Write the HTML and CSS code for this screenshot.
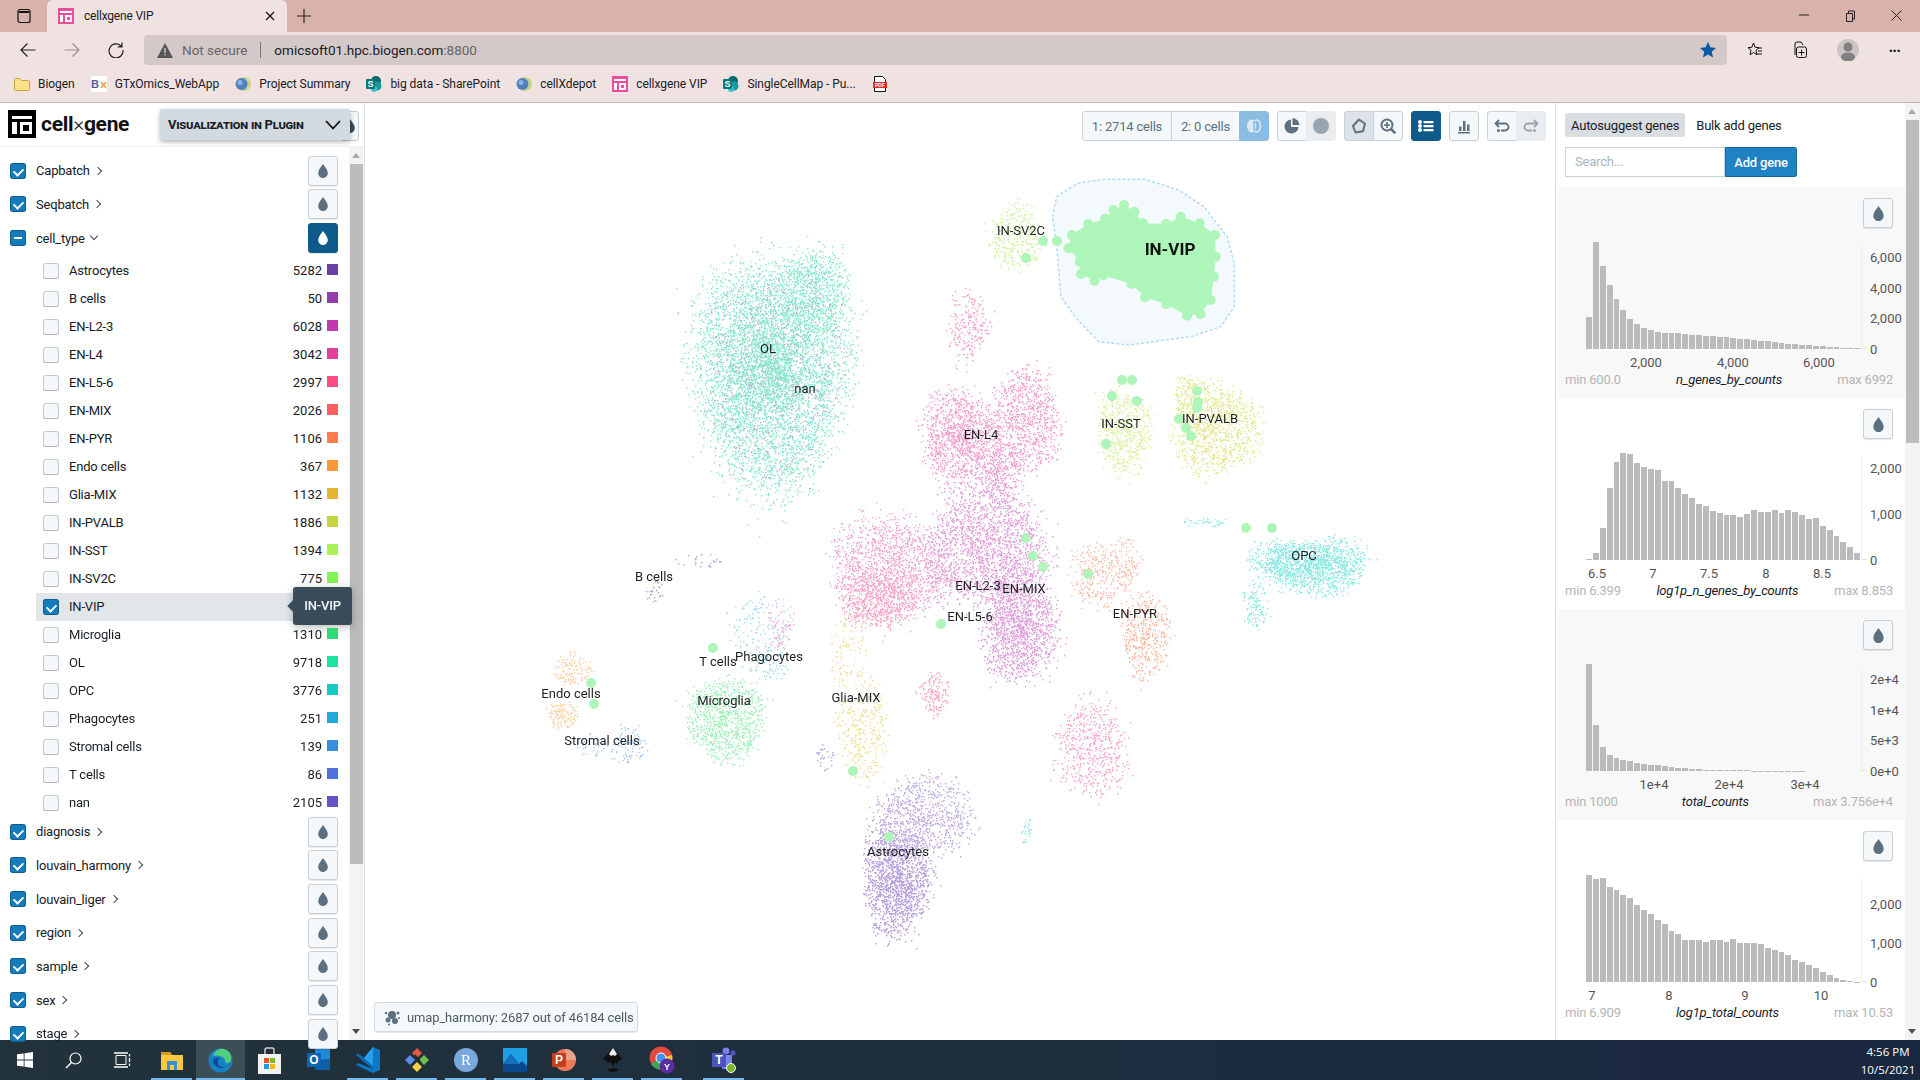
FILE: index.html
```html
<!DOCTYPE html>
<html lang="en">
<head>
  <meta charset="UTF-8" />
  <title>cellxgene VIP</title>
  <link rel="stylesheet" href="styles.css">
</head>
<body>
  <svg class="icon-defs" width="0" height="0">
    <symbol id="i-drop" viewBox="0 0 16 16"><path d="M8 0C5.6 3.6 2.5 6.800 2.500 10.300 2.500 13.500 5 16 8 16s5.500-2.500 5.500-5.700C13.500 6.800 10.400 3.600 8 0z"/></symbol>
    <symbol id="i-fav" viewBox="0 0 16 16"><rect width="16" height="16" fill="#ee4c9e"/><path d="M2 3h12v2H2zM2 7h3v7H2zM7 7h7v7H7z" fill="#fff"/><rect x="9" y="9" width="3" height="3" fill="#ee4c9e"/></symbol>
    <symbol id="i-globe" viewBox="0 0 16 16"><circle cx="9" cy="8" r="7" fill="#c4d58a"/><circle cx="6.500" cy="8" r="6" fill="#4f7fc0"/><circle cx="5" cy="6.500" r="2.500" fill="#8fb3e0"/></symbol>
    <symbol id="i-sp" viewBox="0 0 16 16"><circle cx="10" cy="5" r="5" fill="#036c70"/><circle cx="11" cy="10" r="4.500" fill="#1a9ba1"/><circle cx="8" cy="13" r="3" fill="#37c6d0"/><rect y="3" width="9" height="10" rx="1" fill="#03787c"/><text x="4.500" y="11" class="glyph-s">S</text></symbol>
  </svg>

  <header class="browser">
    <div class="tabstrip">
      <svg class="tabs-btn" width="14" height="16" viewBox="0 0 14 16"><rect x="1" y="1.500" width="12" height="13" rx="2" fill="none" stroke="#111" stroke-width="1.200"/><path d="M2 4h10" stroke="#111" stroke-width="2"/></svg>
      <div class="tab">
        <svg class="fav" width="16" height="16"><use href="#i-fav"/></svg>
        <span class="tab-title">cellxgene VIP</span>
        <svg width="10" height="10" viewBox="0 0 10 10"><path d="M1 1l8 8M9 1l-8 8" stroke="#111" stroke-width="1.300"/></svg>
      </div>
      <svg class="new-tab" width="14" height="14" viewBox="0 0 14 14"><path d="M7 0v14M0 7h14" stroke="#222" stroke-width="1.100"/></svg>
      <div class="win-btns">
        <svg width="10" height="10" viewBox="0 0 10 10"><path d="M0 5h10" stroke="#222"/></svg>
        <svg width="10" height="12" viewBox="0 0 10 12"><path d="M1.500 3.500h6v8h-6zM3.500 3.500V1h6v8h-2" fill="none" stroke="#222"/></svg>
        <svg width="11" height="11" viewBox="0 0 11 11"><path d="M.5.500l10 10M10.500.500l-10 10" stroke="#222"/></svg>
      </div>
    </div>
    <div class="toolbar">
      <svg class="nav-ico" width="16" height="16" viewBox="0 0 16 16"><path d="M15.500 8H1M7.500 1.500L1 8l6.500 6.500" fill="none" stroke="#222" stroke-width="1.200"/></svg>
      <svg class="nav-ico" width="16" height="16" viewBox="0 0 16 16"><path d="M.5 8H15M8.500 1.500L15 8l-6.500 6.500" fill="none" stroke="#9a9090" stroke-width="1.200"/></svg>
      <svg class="nav-ico" width="16" height="16" viewBox="0 0 16 16"><path d="M13.500 4.500A7 7 0 1 0 15 8M14 .500v4.300H9.800" fill="none" stroke="#222" stroke-width="1.200"/></svg>
      <div class="addr">
        <svg width="16" height="15" viewBox="0 0 16 15"><path d="M8 0l8 15H0z" fill="#555"/><path d="M7.300 5h1.400v5H7.300zM7.300 11h1.400v1.500H7.300z" fill="#d4c8c8"/></svg>
        <span class="addr-warn">Not secure</span>
        <span class="addr-sep"></span>
        <span class="addr-url">omicsoft01.hpc.biogen.com<span class="addr-port">:8800</span></span>
        <svg class="addr-star" width="16" height="16" viewBox="0 0 16 16"><path d="M8 0l2.400 5.300 5.600.6-4.200 3.800 1.200 5.700L8 12.500l-5 2.900 1.200-5.700L0 5.900l5.600-.6z" fill="#0a5aa8"/></svg>
      </div>
      <div class="tool-right">
        <svg width="16" height="16" viewBox="0 0 16 16"><path d="M6.500 1l1.700 4.300 3.800.3-3 2.700.9 4.500-3.400-2.300-3.400 2.300.9-4.500-3-2.700 3.800-.3z" fill="none" stroke="#111"/><path d="M11 6h4M11 9h4M10 12h5" stroke="#111"/></svg>
        <svg width="16" height="18" viewBox="0 0 16 18"><path d="M3 14V3a2 2 0 0 1 2-2h4l2 3" fill="none" stroke="#111"/><rect x="4.500" y="6" width="10" height="10.500" rx="2" fill="none" stroke="#111"/><path d="M9.500 8.500v6M6.500 11.500h6" stroke="#111"/></svg>
        <svg class="avatar" width="22" height="22" viewBox="0 0 22 22"><circle cx="11" cy="11" r="11" fill="#c8c4c2"/><circle cx="11" cy="8" r="4.500" fill="#7f7f7f"/><ellipse cx="11" cy="18" rx="7" ry="4.500" fill="#7f7f7f"/></svg>
        <span class="more">···</span>
      </div>
    </div>
    <div class="bookmarks">
      <span class="bm"><svg width="16" height="16" viewBox="0 0 16 16"><path d="M.5 3.500a1 1 0 0 1 1-1h4l2 2h7a1 1 0 0 1 1 1v8a1 1 0 0 1-1 1h-13a1 1 0 0 1-1-1z" fill="#fbe08a" stroke="#c8a43c"/></svg>Biogen</span>
      <span class="bm"><svg width="16" height="16" viewBox="0 0 16 16"><rect width="16" height="16" fill="#fff"/><text x="0" y="12" class="glyph-bx">B</text><path d="M10 6l5 6M15 6l-5 6" stroke="#e8a33c" stroke-width="1.500"/></svg>GTxOmics_WebApp</span>
      <span class="bm"><svg width="16" height="16"><use href="#i-globe"/></svg>Project Summary</span>
      <span class="bm"><svg width="16" height="16"><use href="#i-sp"/></svg>big data - SharePoint</span>
      <span class="bm"><svg width="16" height="16"><use href="#i-globe"/></svg>cellXdepot</span>
      <span class="bm"><svg width="16" height="16"><use href="#i-fav"/></svg>cellxgene VIP</span>
      <span class="bm"><svg width="16" height="16"><use href="#i-sp"/></svg>SingleCellMap - Pu...</span>
      <span class="bm"><svg width="16" height="16" viewBox="0 0 16 16"><path d="M2.500.500h8l3 3v12h-11z" fill="#fff" stroke="#111"/><rect x="1" y="6" width="14" height="6" fill="#e02b20"/><text x="8" y="11" class="glyph-pdf">PDF</text></svg></span>
    </div>
  </header>

  <main class="app">
    <aside class="sidebar">
      <div class="logo-row">
        <svg class="logo" width="28" height="28" viewBox="0 0 28 28"><rect width="28" height="28" fill="#000"/><path d="M4 6h20v3H4zM4 12h5v12H4zM12 12h12v12H12z" fill="#fff"/><rect x="15" y="15" width="6" height="6" fill="#000"/></svg>
        <span class="logo-text">cell<span class="logo-x">×</span>gene</span>
        <button class="edge-btn"><svg width="14" height="14"><use href="#i-drop"/></svg></button>
        <div class="plugin-drop">
          <span>Visualization in Plugin</span>
          <svg width="16" height="10" viewBox="0 0 16 10"><path d="M1 1l7 7.500L15 1" fill="none" stroke="#111" stroke-width="1.800"/></svg>
        </div>
      </div>
      <div class="side-body">
        <div class="cat-list">
          <div class="cat"><span class="check on"></span><span class="cat-name">Capbatch</span><span class="chev"></span><button class="drop-btn"><svg width="14" height="14"><use href="#i-drop"/></svg></button></div>
          <div class="cat"><span class="check on"></span><span class="cat-name">Seqbatch</span><span class="chev"></span><button class="drop-btn"><svg width="14" height="14"><use href="#i-drop"/></svg></button></div>
          <div class="cat"><span class="check mixed"></span><span class="cat-name">cell_type</span><span class="chev down"></span><button class="drop-btn active"><svg width="14" height="14"><use href="#i-drop"/></svg></button></div>
          <div class="cell-list">
            <div class="cell"><span class="check"></span><span class="cell-name">Astrocytes</span><span class="cell-n">5282</span><i class="swatch c-astro"></i></div>
            <div class="cell"><span class="check"></span><span class="cell-name">B cells</span><span class="cell-n">50</span><i class="swatch c-b"></i></div>
            <div class="cell"><span class="check"></span><span class="cell-name">EN-L2-3</span><span class="cell-n">6028</span><i class="swatch c-l23"></i></div>
            <div class="cell"><span class="check"></span><span class="cell-name">EN-L4</span><span class="cell-n">3042</span><i class="swatch c-l4"></i></div>
            <div class="cell"><span class="check"></span><span class="cell-name">EN-L5-6</span><span class="cell-n">2997</span><i class="swatch c-l56"></i></div>
            <div class="cell"><span class="check"></span><span class="cell-name">EN-MIX</span><span class="cell-n">2026</span><i class="swatch c-mix"></i></div>
            <div class="cell"><span class="check"></span><span class="cell-name">EN-PYR</span><span class="cell-n">1106</span><i class="swatch c-pyr"></i></div>
            <div class="cell"><span class="check"></span><span class="cell-name">Endo cells</span><span class="cell-n">367</span><i class="swatch c-endo"></i></div>
            <div class="cell"><span class="check"></span><span class="cell-name">Glia-MIX</span><span class="cell-n">1132</span><i class="swatch c-glia"></i></div>
            <div class="cell"><span class="check"></span><span class="cell-name">IN-PVALB</span><span class="cell-n">1886</span><i class="swatch c-pvalb"></i></div>
            <div class="cell"><span class="check"></span><span class="cell-name">IN-SST</span><span class="cell-n">1394</span><i class="swatch c-sst"></i></div>
            <div class="cell"><span class="check"></span><span class="cell-name">IN-SV2C</span><span class="cell-n">775</span><i class="swatch c-sv2c"></i></div>
            <div class="cell hover"><span class="check on"></span><span class="cell-name">IN-VIP</span><div class="tip">IN-VIP</div></div>
            <div class="cell"><span class="check"></span><span class="cell-name">Microglia</span><span class="cell-n">1310</span><i class="swatch c-micro"></i></div>
            <div class="cell"><span class="check"></span><span class="cell-name">OL</span><span class="cell-n">9718</span><i class="swatch c-ol"></i></div>
            <div class="cell"><span class="check"></span><span class="cell-name">OPC</span><span class="cell-n">3776</span><i class="swatch c-opc"></i></div>
            <div class="cell"><span class="check"></span><span class="cell-name">Phagocytes</span><span class="cell-n">251</span><i class="swatch c-phago"></i></div>
            <div class="cell"><span class="check"></span><span class="cell-name">Stromal cells</span><span class="cell-n">139</span><i class="swatch c-stromal"></i></div>
            <div class="cell"><span class="check"></span><span class="cell-name">T cells</span><span class="cell-n">86</span><i class="swatch c-t"></i></div>
            <div class="cell"><span class="check"></span><span class="cell-name">nan</span><span class="cell-n">2105</span><i class="swatch c-nan"></i></div>
          </div>
          <div class="cat"><span class="check on"></span><span class="cat-name">diagnosis</span><span class="chev"></span><button class="drop-btn"><svg width="14" height="14"><use href="#i-drop"/></svg></button></div>
          <div class="cat"><span class="check on"></span><span class="cat-name">louvain_harmony</span><span class="chev"></span><button class="drop-btn"><svg width="14" height="14"><use href="#i-drop"/></svg></button></div>
          <div class="cat"><span class="check on"></span><span class="cat-name">louvain_liger</span><span class="chev"></span><button class="drop-btn"><svg width="14" height="14"><use href="#i-drop"/></svg></button></div>
          <div class="cat"><span class="check on"></span><span class="cat-name">region</span><span class="chev"></span><button class="drop-btn"><svg width="14" height="14"><use href="#i-drop"/></svg></button></div>
          <div class="cat"><span class="check on"></span><span class="cat-name">sample</span><span class="chev"></span><button class="drop-btn"><svg width="14" height="14"><use href="#i-drop"/></svg></button></div>
          <div class="cat"><span class="check on"></span><span class="cat-name">sex</span><span class="chev"></span><button class="drop-btn"><svg width="14" height="14"><use href="#i-drop"/></svg></button></div>
          <div class="cat"><span class="check on"></span><span class="cat-name">stage</span><span class="chev"></span><button class="drop-btn"><svg width="14" height="14"><use href="#i-drop"/></svg></button></div>
        </div>
        <div class="scroll side-scroll"><b class="arrow up"></b><div class="thumb"></div><b class="arrow dn"></b></div>
      </div>
    </aside>

    <section class="plot" id="plot">
      <canvas id="scatter" width="1190" height="937"></canvas>
      <div class="plot-tools">
        <div class="btn-group">
          <span class="tbtn txt">1: 2714 cells</span>
          <span class="tbtn txt">2: 0 cells</span>
          <span class="tbtn venn"><svg width="16" height="16" viewBox="0 0 16 16"><ellipse cx="5.500" cy="8" rx="4.500" ry="6.500" fill="#dce9f3"/><ellipse cx="10.500" cy="8" rx="4" ry="6" fill="none" stroke="#dce9f3" stroke-width="1.500"/><path d="M8 3v10" stroke="#8bbde2" stroke-width="1.500"/></svg></span>
        </div>
        <div class="btn-group">
          <span class="tbtn"><svg width="16" height="16" viewBox="0 0 16 16"><path d="M7 1.500a7 7 0 1 0 7.500 7.500H7z" fill="#5c7080"/><path d="M8.500 0v7h7A7.500 7.500 0 0 0 8.500 0z" fill="#5c7080"/></svg></span>
          <span class="tbtn off"><svg width="16" height="16" viewBox="0 0 16 16"><circle cx="8" cy="8" r="8" fill="#98a5b1"/></svg></span>
        </div>
        <div class="btn-group">
          <span class="tbtn pressed"><svg width="16" height="16" viewBox="0 0 16 16"><path d="M8 1.500l6 4.200-2 7.500-7.500 1.300-2.500-6.500z" fill="none" stroke="#5c7080" stroke-width="2" stroke-linejoin="round"/></svg></span>
          <span class="tbtn"><svg width="16" height="16" viewBox="0 0 16 16"><circle cx="7" cy="7" r="5.500" fill="none" stroke="#5c7080" stroke-width="2"/><path d="M11 11l4.300 4.300" stroke="#5c7080" stroke-width="2.500"/><path d="M7 4v6M4 7h6" stroke="#5c7080" stroke-width="1.600"/></svg></span>
        </div>
        <span class="tbtn solo dark"><svg width="16" height="16" viewBox="0 0 16 16"><path d="M5.500 3h10v2.200h-10zM5.500 7h10v2.200h-10zM5.500 11h10v2.200h-10z" fill="#fff"/><circle cx="2" cy="4" r="2" fill="#fff"/><circle cx="2" cy="8" r="2" fill="#fff"/><circle cx="2" cy="12" r="2" fill="#fff"/></svg></span>
        <span class="tbtn solo"><svg width="16" height="16" viewBox="0 0 16 16"><path d="M2 14h12v1.500H2zM3 8.500h2.500V13H3zM7 3h2.500v10H7zM11 6.500h2.500V13H11z" fill="#5c7080"/></svg></span>
        <div class="btn-group">
          <span class="tbtn"><svg width="16" height="16" viewBox="0 0 16 16"><path d="M5 2L1.500 5.500 5 9" fill="none" stroke="#5c7080" stroke-width="1.800"/><path d="M2 5.500h9a3.500 3.500 0 0 1 0 7H7" fill="none" stroke="#5c7080" stroke-width="1.800"/><circle cx="4.500" cy="12.500" r="1.500" fill="#5c7080"/></svg></span>
          <span class="tbtn off"><svg width="16" height="16" viewBox="0 0 16 16"><path d="M11 2l3.500 3.500L11 9" fill="none" stroke="#98a5b1" stroke-width="1.800"/><path d="M14 5.500H5a3.500 3.500 0 0 0 0 7h4" fill="none" stroke="#98a5b1" stroke-width="1.800"/><circle cx="11.500" cy="12.500" r="1.500" fill="#98a5b1"/></svg></span>
        </div>
      </div>
      <div class="status">
        <svg width="17" height="17" viewBox="0 0 17 17"><circle cx="8" cy="6" r="4" fill="#5c7080"/><circle cx="4" cy="11" r="2.500" fill="#5c7080"/><circle cx="11" cy="12" r="3" fill="#5c7080"/><circle cx="2" cy="4" r="1.200" fill="#5c7080"/><circle cx="14" cy="4" r="1.500" fill="#5c7080"/><circle cx="15" cy="9" r="1" fill="#5c7080"/><circle cx="5" cy="15.500" r="1" fill="#5c7080"/></svg>
        <span>umap_harmony: 2687 out of 46184 cells</span>
      </div>
    </section>

    <aside class="genes">
      <div class="genes-body">
        <div class="gene-tabs">
          <span class="gene-tab on">Autosuggest genes</span>
          <span class="gene-tab">Bulk add genes</span>
        </div>
        <div class="gene-search">
          <span class="search-box">Search...</span>
          <span class="add-gene">Add gene</span>
        </div>
        <div id="hists"></div>
      </div>
      <div class="scroll gene-scroll"><b class="arrow up"></b><div class="thumb"></div><b class="arrow dn"></b></div>
    </aside>
  </main>

  <footer class="taskbar">
    <span class="task"><svg width="16" height="16" viewBox="0 0 16 16"><path d="M0 2.300l6.700-.9v6.200H0zM7.500 1.300L16 0v7.600H7.500zM0 8.400h6.700v6.200L0 13.700zM7.500 8.400H16V16l-8.500-1.200z" fill="#fff"/></svg></span>
    <span class="task"><svg width="17" height="17" viewBox="0 0 17 17"><circle cx="10.500" cy="6.500" r="5.500" fill="none" stroke="#fff" stroke-width="1.200"/><path d="M6.500 10.500L1 16" stroke="#fff" stroke-width="1.400"/></svg></span>
    <span class="task"><svg width="18" height="16" viewBox="0 0 18 16"><path d="M2 3.500h10v9H2z" fill="none" stroke="#fff"/><path d="M0 1h14M0 15h14M15.500 2v2.500M15.500 6v4M15.500 11.500V14" stroke="#fff" stroke-width="1.300"/></svg></span>
    <span class="task run"><svg width="24" height="22" viewBox="0 0 24 22"><path d="M1 3h9l2 3h11v15H1z" fill="#f8c93e"/><path d="M1 3h9l2 3H1z" fill="#d49a1c"/><path d="M7 12h10v9h-3v-5h-4v5H7z" fill="#3a8fd8"/></svg></span>
    <span class="task run cur"><svg width="25" height="25" viewBox="0 0 25 25"><circle cx="12.500" cy="12.500" r="12" fill="#1b7fc4"/><path d="M5 8a9 9 0 0 1 18 4c0 3-4 3.500-6 2.500 1.500-5-6-8-12-6.500z" fill="#4fd07c"/><path d="M12 10a5 5 0 0 0 2 9c3 1 6 0 8-2-5 5-16 4-17-4 1-3 4-4 7-3z" fill="#0a4f96"/></svg></span>
    <span class="task"><svg width="23" height="27" viewBox="0 0 23 27"><path d="M7 7V3a2 2 0 0 1 2-2h5a2 2 0 0 1 2 2v4" fill="none" stroke="#ccc" stroke-width="1.500"/><rect y="7" width="23" height="20" fill="#f2f2f2"/><rect x="6" y="11" width="5" height="5" fill="#e8542a"/><rect x="12" y="11" width="5" height="5" fill="#7eb62a"/><rect x="6" y="17" width="5" height="5" fill="#1f9ce0"/><rect x="12" y="17" width="5" height="5" fill="#f4b71c"/></svg></span>
    <span class="task"><svg width="24" height="24" viewBox="0 0 24 24"><path d="M8 1h15v21H8z" fill="#1f8ad8"/><path d="M8 12l15-1v11H8z" fill="#0f5fa8"/><rect y="5" width="14" height="14" fill="#0a64b4"/><text x="7" y="16" class="glyph-o">O</text></svg></span>
    <span class="task run"><svg width="24" height="26" viewBox="0 0 24 26"><path d="M17 0l7 3v20l-7 3L0 18l2-2 15 6z" fill="#0a78c8"/><path d="M17 0v22L6 13z" fill="#24a0ec"/><path d="M0 8l2-2 15 13v3z" fill="#0a6bb4"/></svg></span>
    <span class="task run"><svg width="24" height="24" viewBox="0 0 24 24"><path d="M12 0l5 5-5 5-5-5z" fill="#e0584c"/><path d="M5 7l5 5-5 5-5-5z" fill="#5b8ee0"/><path d="M19 7l5 5-5 5-5-5z" fill="#6cc24a"/><path d="M12 14l5 5-5 5-5-5z" fill="#f5d24a"/><path d="M10 7l6 8" stroke="#222" stroke-width="1.500"/></svg></span>
    <span class="task run"><svg width="24" height="24" viewBox="0 0 24 24"><circle cx="12" cy="12" r="12" fill="#78a8dc"/><text x="12" y="17" class="glyph-r">R</text></svg></span>
    <span class="task run"><svg width="24" height="24" viewBox="0 0 24 24"><rect width="24" height="24" fill="#1ea0e6"/><path d="M0 24V16L8 6l8 10 3-3 5 5v6z" fill="#0a4a8c"/><path d="M8 6l8 10H0z" fill="#1670bc"/></svg></span>
    <span class="task run"><svg width="24" height="24" viewBox="0 0 24 24"><circle cx="13" cy="12" r="11" fill="#f07a58"/><path d="M13 1a11 11 0 0 1 11 11H13z" fill="#e8a488"/><rect y="5" width="14" height="14" rx="1" fill="#c43e1c"/><text x="7" y="16" class="glyph-o">P</text></svg></span>
    <span class="task run"><svg width="24" height="25" viewBox="0 0 24 25"><path d="M12 0l9 11-3 2-2 3-2-2-2 5-2-5-3 1-2-3-3-1z" fill="#111"/><path d="M12 0l4 6-2 2-2-1-2 1-2-2z" fill="#eee"/><ellipse cx="12" cy="22" rx="5" ry="1.800" fill="#111"/></svg></span>
    <span class="task run"><svg width="26" height="28" viewBox="0 0 26 28"><circle cx="12" cy="12" r="11.500" fill="#e04a3c"/><path d="M12 12L2 18a11.500 11.500 0 0 0 13 5z" fill="#3aa858"/><path d="M12 12l3 11A11.500 11.500 0 0 0 23 9z" fill="#f4c430"/><circle cx="12" cy="12" r="5" fill="#4a8fe8" stroke="#fff"/><circle cx="18" cy="20" r="7.500" fill="#5b2da0"/><text x="18" y="24" class="glyph-y">Y</text></svg></span>
    <span class="task run teams"><svg width="24" height="26" viewBox="0 0 24 26"><circle cx="14" cy="4" r="3.500" fill="#7b83eb"/><circle cx="21" cy="6" r="2.500" fill="#5059c9"/><path d="M10 8h10v14H10z" fill="#7b83eb"/><rect y="6" width="14" height="14" fill="#4b53bc"/><text x="7" y="17" class="glyph-o">T</text><circle cx="19" cy="21" r="4.500" fill="#7cb82f" stroke="#fff"/></svg></span>
    <div class="clock"><span>4:56 PM</span><span>10/5/2021</span></div>
  </footer>

  <script src="script.js"></script>
</body>
</html>
```
FILE: styles.css
```css
* {
  margin: 0;
  padding: 0;
  box-sizing: border-box;
}

html, body {
  width: 1920px;
  height: 1080px;
  overflow: hidden;
}

body {
  display: flex;
  flex-direction: column;
  font-family: Roboto, sans-serif;
  font-size: 13px;
  letter-spacing: -0.2px;
  color: #182026;
  background: white;
}

.icon-defs {
  position: absolute;
}

button {
  font: inherit;
}

/* browser chrome */
.browser {
  height: 103px;
  flex: none;
  background: #f0e2e1;
  border-bottom: 1px solid #c4b5b3;
}

.tabstrip {
  height: 32px;
  background: #d8b2ab;
  display: flex;
  align-items: center;
  padding-left: 17px;
}

.tabstrip svg {
  flex: none;
}

.tabs-btn {
  margin-right: 16px;
}

.tab {
  width: 240px;
  height: 32px;
  background: #f0e2e1;
  border-radius: 6px 6px 0 0;
  display: flex;
  align-items: center;
  padding: 0 12px 0 11px;
  font-size: 12px;
}

.tab-title {
  flex: 1;
  margin-left: 10px;
}

.new-tab {
  margin-left: 10px;
}

.win-btns {
  margin-left: auto;
  width: 138px;
  padding-right: 18px;
  display: flex;
  justify-content: space-between;
  padding-left: 17px;
}

.toolbar {
  height: 36px;
  display: flex;
  align-items: center;
  padding: 0 20px 0 0;
}

.nav-ico {
  margin-left: 20px;
  margin-right: 8px;
  flex: none;
}

.addr {
  margin-left: 12px;
  width: 1583px;
  flex: none;
  height: 30px;
  background: #d4c8c8;
  border-radius: 4px;
  display: flex;
  align-items: center;
  padding: 0 12px 0 13px;
  font-size: 13.500px;
  letter-spacing: 0;
}

.addr-warn {
  color: #666;
  margin-left: 9px;
}

.addr-sep {
  width: 1px;
  height: 16px;
  background: #777;
  margin: 0 13px;
}

.addr-port {
  color: #666;
}

.addr-star {
  margin-left: auto;
  margin-right: -1px;
}

.tool-right {
  flex: 1;
  display: flex;
  align-items: center;
  justify-content: space-between;
  padding-left: 20px;
}

.more {
  font-weight: 700;
  font-size: 16px;
  letter-spacing: -1px;
}

.bookmarks {
  height: 34px;
  display: flex;
  align-items: center;
  gap: 16px;
  padding: 0 0 2px 14px;
  font-size: 12px;
  letter-spacing: -0.05px;
}

.bm {
  display: flex;
  align-items: center;
  gap: 8px;
}

.glyph-s, .glyph-o, .glyph-r, .glyph-y, .glyph-pdf {
  font-family: "Liberation Sans", sans-serif;
  fill: #fff;
  text-anchor: middle;
  font-weight: 700;
}

.glyph-s {
  font-size: 9px;
}

.glyph-o {
  font-size: 12px;
}

.glyph-r {
  font-family: "Liberation Serif", serif;
  font-weight: 400;
  font-size: 15px;
}

.glyph-y {
  font-size: 9px;
}

.glyph-pdf {
  font-size: 5px;
}

.glyph-bx {
  font-family: "Liberation Sans", sans-serif;
  font-weight: 700;
  font-size: 11px;
  fill: #55609c;
}

/* app layout */
.app {
  flex: 1;
  display: flex;
  min-height: 0;
}

.sidebar {
  width: 365px;
  flex: none;
  display: flex;
  flex-direction: column;
  border-right: 1px solid #d8e1e8;
}

.logo-row {
  height: 44px;
  flex: none;
  display: flex;
  align-items: center;
  padding: 0 0 2px 8px;
  border-bottom: 1px solid #eef0f2;
  position: relative;
}

.logo-text {
  font-size: 21px;
  font-weight: 700;
  margin-left: 5px;
  color: #111;
  letter-spacing: -0.3px;
}

.logo-x {
  font-weight: 300;
}

.edge-btn {
  position: absolute;
  left: 340px;
  top: 8px;
  width: 19px;
  height: 30px;
  background: #f5f8fa;
  border: 1px solid #c5ccd2;
  border-radius: 3px;
  display: flex;
  align-items: center;
  justify-content: center;
  fill: #394b59;
}

.plugin-drop {
  position: absolute;
  left: 160px;
  top: 6px;
  width: 190px;
  height: 31px;
  background: #d3dadf;
  box-shadow: 0 2px 5px rgba(0, 0, 0, 0.3);
  border-radius: 2px;
  display: flex;
  align-items: center;
  justify-content: space-between;
  padding: 0 9px 0 8px;
  font-variant: small-caps;
  font-weight: 700;
  font-size: 13px;
  letter-spacing: -0.25px;
}

.side-body {
  flex: 1;
  min-height: 0;
  display: flex;
}

.cat-list {
  flex: 1;
  position: relative;
  z-index: 1;
  padding: 7px 11px 0 10px;
}

.cat {
  height: 33.670px;
  display: flex;
  align-items: center;
}

.cat-name {
  margin-left: 10px;
}

.chev {
  width: 6px;
  height: 6px;
  margin-left: 5px;
  border-top: 1.500px solid #394b59;
  border-right: 1.500px solid #394b59;
  transform: rotate(45deg);
}

.chev.down {
  transform: translateY(-2px) rotate(135deg);
  margin-left: 6px;
}

.check {
  width: 16px;
  height: 16px;
  flex: none;
  border-radius: 3px;
  background: #f5f8fa;
  box-shadow: inset 0 0 0 1px rgba(16, 22, 26, 0.2), inset 0 -1px 0 rgba(16, 22, 26, 0.1);
  position: relative;
}

.check.on, .check.mixed {
  background: #137cbd;
  box-shadow: inset 0 0 0 1px rgba(16, 22, 26, 0.3);
}

.check.on::after {
  content: "";
  position: absolute;
  left: 5px;
  top: 3px;
  width: 5px;
  height: 8px;
  border-right: 2px solid white;
  border-bottom: 2px solid white;
  transform: rotate(45deg) scale(0.95);
}

.check.mixed::after {
  content: "";
  position: absolute;
  left: 4px;
  top: 7px;
  width: 8px;
  height: 2px;
  background: white;
}

.drop-btn {
  margin-left: auto;
  width: 30px;
  height: 30px;
  flex: none;
  background: #f5f8fa;
  border: 1px solid #c9d0d6;
  border-radius: 3px;
  box-shadow: 0 1px 1px rgba(16, 22, 26, 0.1);
  display: flex;
  align-items: center;
  justify-content: center;
  fill: #5c7080;
}

.drop-btn.active {
  background: #0e5a8a;
  border-color: #0e5a8a;
  fill: white;
}

.cell-list {
  margin: 2px 0 -2px 26px;
}

.cell {
  height: 28px;
  display: flex;
  align-items: center;
  padding-left: 7px;
  position: relative;
}

.cell-name {
  margin-left: 10px;
  flex: 1;
}

.cell-n {
  margin-right: 5px;
  letter-spacing: 0;
}

.swatch {
  width: 11px;
  height: 11px;
  display: block;
  transform: translateY(-1px);
}

.cell.hover {
  background: #e2e6e9;
}

.tip {
  position: absolute;
  left: 257px;
  top: -6px;
  width: 59px;
  height: 38px;
  background: #394b59;
  color: #f5f8fa;
  border-radius: 3px;
  font-weight: 500;
  display: flex;
  align-items: center;
  justify-content: center;
  box-shadow: 0 2px 8px rgba(16, 22, 26, 0.3);
}

.tip::before {
  content: "";
  position: absolute;
  left: -4px;
  top: 15px;
  width: 8px;
  height: 8px;
  background: #394b59;
  transform: rotate(45deg);
}

.c-astro { background: #6b3fa8; }
.c-b { background: #953cb0; }
.c-l23 { background: #c03bb0; }
.c-l4 { background: #e53f9e; }
.c-l56 { background: #fb4c86; }
.c-mix { background: #fd5f5f; }
.c-pyr { background: #fd7d4a; }
.c-endo { background: #fd9838; }
.c-glia { background: #e3b532; }
.c-pvalb { background: #c6d43c; }
.c-sst { background: #aaf158; }
.c-sv2c { background: #80f552; }
.c-micro { background: #2dda76; }
.c-ol { background: #1de3a2; }
.c-opc { background: #16cbc3; }
.c-phago { background: #20a9dc; }
.c-stromal { background: #348fe3; }
.c-t { background: #4f71dc; }
.c-nan { background: #6353c8; }

.scroll {
  width: 15px;
  flex: none;
  background: #f3f3f3;
  position: relative;
}

.thumb {
  position: absolute;
  left: 1px;
  right: 1px;
  background: #bcbcbc;
}

.side-scroll .thumb {
  top: 17px;
  height: 700px;
}

.gene-scroll .thumb {
  top: 17px;
  height: 323px;
}

.arrow {
  position: absolute;
  left: 3px;
  width: 0;
  height: 0;
  border-left: 4px solid transparent;
  border-right: 4px solid transparent;
}

.arrow.up {
  top: 6px;
  border-bottom: 5px solid #a8a8a8;
}

.arrow.dn {
  bottom: 6px;
  border-top: 5px solid #505050;
}

/* plot */
.plot {
  flex: 1;
  position: relative;
  min-width: 0;
  letter-spacing: 0;
}

#scatter {
  position: absolute;
  left: 0;
  top: 0;
}

.plot-tools {
  position: relative;
  display: flex;
  justify-content: flex-end;
  gap: 8px;
  padding: 8px 9px 0 0;
  letter-spacing: -0.2px;
}

.btn-group {
  display: flex;
}

.tbtn {
  height: 30px;
  width: 30px;
  display: flex;
  align-items: center;
  justify-content: center;
  background: #f5f8fa;
  border: 1px solid #c9d0d6;
  margin-right: -1px;
  color: #5c7080;
  white-space: nowrap;
}

.btn-group .tbtn:first-child {
  border-radius: 3px 0 0 3px;
}

.btn-group .tbtn:last-child {
  border-radius: 0 3px 3px 0;
  margin-right: 0;
}

.tbtn.txt:first-child {
  width: 90px;
}

.tbtn.txt:nth-child(2) {
  width: 69px;
}

.tbtn.venn {
  background: #8bbde2;
  border-color: #8bbde2;
}

.tbtn.off {
  background: #e9edf0;
  border-color: #e9edf0;
}

.tbtn.pressed {
  background: #dce2e7;
}

.tbtn.solo {
  margin-right: 0;
  border-radius: 3px;
}

.tbtn.dark {
  background: #0e5a8a;
  border-color: #0e5a8a;
}

.status {
  position: absolute;
  left: 9px;
  bottom: 8px;
  width: 264px;
  height: 30px;
  display: flex;
  align-items: center;
  gap: 6px;
  padding-left: 9px;
  background: #f5f8fa;
  border: 1px solid #d5dadf;
  border-radius: 3px;
  color: #4d5c68;
  white-space: nowrap;
  letter-spacing: -0.15px;
  box-shadow: 0 1px 1px rgba(16, 22, 26, 0.1);
}

.plot-label {
  position: absolute;
  transform: translate(-50%, -50%);
  color: #1b1f22;
  white-space: nowrap;
}

.plot-label.big {
  font-size: 17px;
  font-weight: 700;
  color: #111;
}

/* gene panel */
.genes {
  width: 365px;
  flex: none;
  display: flex;
  border-left: 1px solid #d8e1e8;
}

.genes-body {
  flex: 1;
  min-width: 0;
  overflow: hidden;
  padding-left: 2px;
}

.gene-tabs {
  height: 44px;
  display: flex;
  align-items: center;
  padding-left: 7px;
}

.gene-tab {
  height: 24px;
  padding: 0 6px;
  display: flex;
  align-items: center;
  border-radius: 3px;
  margin-right: 5px;
}

.gene-tab.on {
  background: #d8dde1;
}

.gene-search {
  display: flex;
  height: 30px;
  margin: 0 0 10px 7px;
}

.search-box {
  width: 160px;
  padding: 0 0 2px 9px;
  display: flex;
  align-items: center;
  color: #a7b6c2;
  background: white;
  border: 1px solid #ccd3d8;
}

.add-gene {
  width: 72px;
  display: flex;
  align-items: center;
  justify-content: center;
  background: #1e82c4;
  color: white;
  font-weight: 500;
  border-radius: 0 3px 3px 0;
  box-shadow: inset 0 0 0 1px rgba(16, 22, 26, 0.25);
}

.hist {
  height: 211px;
  padding-top: 11px;
}

.hist:nth-child(odd) {
  background: #f8f8f8;
}

.hist-top {
  display: flex;
  justify-content: flex-end;
  padding-right: 12px;
  margin-bottom: 9px;
}

.hist-top .drop-btn {
  margin: 0;
}

.hist-plot {
  position: relative;
  margin-left: 28px;
  width: 275px;
  height: 112px;
}

.hist-bars {
  height: 100%;
  display: flex;
  align-items: flex-end;
}

.hist-bar {
  flex: 1;
  margin-right: 1px;
  background: #bbbbbb;
}

.hist-axis {
  position: absolute;
  right: 0;
  bottom: 0;
  width: 6px;
  height: 104px;
  border-left: 1px solid #eeeeee;
  border-bottom: 1px solid #e4e4e4;
  margin-right: -6px;
}

.y-tick, .x-tick {
  position: absolute;
  color: #555;
  white-space: nowrap;
  letter-spacing: 0;
}

.y-tick {
  left: 284px;
  transform: translateY(50%);
}

.x-row {
  position: relative;
  height: 20px;
  margin-left: 28px;
}

.x-tick {
  top: 6px;
  line-height: 16px;
  transform: translateX(-50%);
}

.hist-foot {
  display: flex;
  justify-content: space-between;
  align-items: center;
  height: 16px;
  margin-top: 2px;
  padding: 0 12px 0 7px;
  color: #b5b5b5;
}

.hist-name {
  font-style: italic;
  color: #182026;
}

/* taskbar */
.taskbar {
  height: 40px;
  flex: none;
  display: flex;
  align-items: center;
  background: linear-gradient(to right, #22333b, #1a2740);
  color: white;
  letter-spacing: 0;
}

.task {
  width: 49px;
  height: 40px;
  flex: none;
  display: flex;
  align-items: center;
  justify-content: center;
  position: relative;
}

.task.run::after {
  content: "";
  position: absolute;
  left: 4px;
  right: 4px;
  bottom: 0;
  height: 2px;
  background: #76b9ed;
}

.task.cur {
  background: #3c4f57;
}

.task.cur::after {
  left: 0;
  right: 0;
}

.task.teams {
  margin-left: 13px;
}

.clock {
  margin-left: auto;
  width: 64px;
  margin-right: 0;
  display: flex;
  flex-direction: column;
  align-items: center;
  gap: 3px;
  font-family: "Open Sans", sans-serif;
  font-size: 11.500px;
  line-height: 15px;
}
```
FILE: script.js
```js
// histogram data read off the figure: bar tops are measured up from the baseline
var hists = [
  {
    name: 'n_genes_by_counts', min: 'min 600.0', max: 'max 6992', base: 507,
    tops: [410,186,259,315,358,390,416,433,444,450,456,458,459,459,462,464,466,467,469,471,472,475,478,478,480,483,483,487,489,492,492,495,496,498,499,500,502,503,505,505],
    y: [['6,000',92],['4,000',61],['2,000',31],['0',0]],
    x: [['2,000',60],['4,000',147],['6,000',233]]
  },
  {
    name: 'log1p_n_genes_by_counts', min: 'min 6.399', max: 'max 8.853', base: 1140,
    tops: [1138,1119,1044,925,846,819,821,849,861,867,871,904,904,925,941,954,972,979,993,999,1005,1005,1010,1001,991,995,995,989,998,991,997,1006,1016,1014,1038,1051,1069,1087,1102,1118],
    y: [['2,000',92],['1,000',46],['0',0]],
    x: [['6.5',11],['7',67],['7.5',123],['8',180],['8.5',236]]
  },
  {
    name: 'total_counts', min: 'min 1000', max: 'max 3.756e+4', base: 453,
    tops: [132,315,381,405,415,421,424,429,432,435,436,439,441,443,445,447,448,449,449,450,450,451,451,451,452,452,452,452,452,452,452,452,453,453,453,453,453,453,453,453],
    y: [['2e+4',92],['1e+4',61],['5e+3',31],['0e+0',0]],
    x: [['1e+4',68],['2e+4',143],['3e+4',219]]
  },
  {
    name: 'log1p_total_counts', min: 'min 6.909', max: 'max 10.53', base: 1086,
    tops: [765,778,775,801,811,825,833,856,869,883,900,912,933,943,959,961,961,967,960,959,965,957,968,968,968,971,985,989,997,1004,1020,1025,1034,1044,1055,1066,1075,1081,1084,1085],
    y: [['2,000',78],['1,000',39],['0',0]],
    x: [['7',6],['8',83],['9',159],['10',235]]
  }
];

function el(tag, cls, text) {
  var e = document.createElement(tag);
  if (cls) e.className = cls;
  if (text) e.textContent = text;
  return e;
}

function buildHist(h) {
  var box = el('div', 'hist');

  var top = el('div', 'hist-top');
  top.innerHTML = '<button class="drop-btn"><svg width="15" height="15"><use href="#i-drop"/></svg></button>';
  box.appendChild(top);

  var plot = el('div', 'hist-plot');
  var bars = el('div', 'hist-bars');
  h.tops.forEach(function (t) {
    var b = el('div', 'hist-bar');
    b.style.height = (h.base - t) / 3 + 'px';
    bars.appendChild(b);
  });
  plot.appendChild(bars);
  plot.appendChild(el('div', 'hist-axis'));
  h.y.forEach(function (tick) {
    var s = el('span', 'y-tick', tick[0]);
    s.style.bottom = tick[1] + 'px';
    plot.appendChild(s);
  });
  box.appendChild(plot);

  var row = el('div', 'x-row');
  h.x.forEach(function (tick) {
    var s = el('span', 'x-tick', tick[0]);
    s.style.left = tick[1] + 'px';
    row.appendChild(s);
  });
  box.appendChild(row);

  var foot = el('div', 'hist-foot');
  foot.appendChild(el('span', '', h.min));
  foot.appendChild(el('span', 'hist-name', h.name));
  foot.appendChild(el('span', '', h.max));
  box.appendChild(foot);
  return box;
}

var holder = document.getElementById('hists');
hists.forEach(function (h) { holder.appendChild(buildHist(h)); });

// scatter plot, in page pixels
var OX = 365, OY = 103;
var ctx = document.getElementById('scatter').getContext('2d');
ctx.translate(-OX, -OY);

var seed = 20211005;
function rnd() {
  seed |= 0; seed = seed + 0x6D2B79F5 | 0;
  var t = Math.imul(seed ^ seed >>> 15, 1 | seed);
  t = t + Math.imul(t ^ t >>> 7, 61 | t) ^ t;
  return ((t ^ t >>> 14) >>> 0) / 4294967296;
}

function gauss() {
  return Math.sqrt(-2 * Math.log(1 - rnd())) * Math.cos(6.283 * rnd());
}

// cx, cy, rx, ry, points, colour, falloff (0.5 = flat, higher = denser centre)
var blobs = [
  [770, 372, 74, 112, 5000, '#90e9cc', .6],
  [815, 290, 32, 42, 700, '#90e9cc', .55],
  [775, 372, 70, 105, 420, '#bda9e6', .6],
  [765, 360, 44, 55, 900, '#8fe0cc', .7],
  [1015, 237, 26, 30, 340, '#cdf5a6', .55],
  [968, 325, 19, 34, 240, '#f6a9c8', .6],
  [958, 436, 36, 44, 1100, '#f4a3cf', .7],
  [1025, 420, 33, 48, 900, '#f4a3cf', .55],
  [996, 470, 24, 28, 320, '#eea0d2', .7],
  [1124, 430, 25, 40, 560, '#dbf2a2', .55],
  [1215, 428, 41, 44, 1000, '#e2e992', .6],
  [1188, 395, 14, 22, 120, '#e2e992', .55],
  [890, 570, 58, 50, 1500, '#f1a9d2', .55],
  [985, 545, 58, 58, 2000, '#e4a3da', .55],
  [1020, 625, 35, 56, 1500, '#dfa2dc', .65],
  [878, 598, 38, 28, 500, '#f9a9c0', .55],
  [1145, 635, 24, 40, 420, '#fdb8a0', .6],
  [1100, 575, 30, 30, 280, '#fbbcaa', .5],
  [1128, 560, 12, 28, 70, '#fcc0a8', .5],
  [1315, 565, 50, 26, 1300, '#8fe8e3', .62],
  [1272, 560, 22, 20, 170, '#8fe8e3', .52],
  [1255, 605, 12, 24, 110, '#8fe8e3', .6],
  [1205, 522, 20, 4, 40, '#8fe8e3', .5],
  [655, 590, 8, 12, 25, '#b9a0e0', .5],
  [700, 560, 26, 6, 24, '#b9a0e0', .5],
  [726, 718, 38, 40, 900, '#a2f0ba', .55],
  [760, 625, 32, 28, 130, '#a4dcf0', .5],
  [780, 625, 14, 22, 70, '#eeb0d4', .5],
  [768, 665, 18, 16, 70, '#9cd8ee', .55],
  [572, 668, 18, 16, 130, '#fcd2a2', .55],
  [562, 715, 14, 14, 120, '#fcd2a2', .55],
  [628, 745, 17, 18, 90, '#a6ccf8', .5],
  [590, 745, 16, 10, 35, '#a6ccf8', .5],
  [862, 730, 24, 50, 300, '#f1dc94', .55],
  [848, 655, 18, 32, 90, '#f1dc94', .5],
  [825, 755, 8, 12, 30, '#b9a9e6', .5],
  [896, 880, 32, 54, 1600, '#baa2dc', .65],
  [925, 815, 46, 38, 800, '#c0aee0', .52],
  [933, 695, 15, 20, 150, '#f8a9c4', .6],
  [1090, 747, 34, 46, 560, '#f9a9c8', .55],
  [1025, 830, 6, 13, 26, '#8fe8e3', .5]
];

blobs.forEach(function (b) {
  ctx.fillStyle = b[5];
  var phase = rnd() * 6.28;
  for (var i = 0; i < b[4]; i++) {
    var a = rnd() * 6.283;
    var r = Math.pow(rnd(), b[6]) * (1 + .1 * Math.sin(3 * a + phase));
    var x = b[0] + Math.cos(a) * r * b[2] + gauss() * b[2] * .14;
    var y = b[1] + Math.sin(a) * r * b[3] + gauss() * b[3] * .14;
    ctx.fillRect(Math.round(x), Math.round(y), 1.4, 1.4);
  }
});

// outlines below were traced in a crop stretched 2.376 x 3
function toPage(p) {
  return [640 + p[0] / 2.376, 160 + p[1] / 3];
}

function trace(points) {
  ctx.beginPath();
  points.forEach(function (p, i) {
    var q = toPage(p);
    if (i) ctx.lineTo(q[0], q[1]); else ctx.moveTo(q[0], q[1]);
  });
  ctx.closePath();
}

trace([[1040,70],[1100,58],[1200,58],[1280,90],[1340,140],[1395,230],[1412,310],[1412,440],[1380,500],[1310,530],[1160,555],[1090,545],[1040,480],[1000,410],[995,330],[990,260],[980,170],[990,110]]);
ctx.fillStyle = '#f4f9fd';
ctx.fill();
ctx.strokeStyle = '#b4dcf5';
ctx.lineWidth = 1.5;
ctx.setLineDash([3, 2]);
ctx.stroke();
ctx.setLineDash([]);

var vip = [[1026,225],[1065,192],[1105,176],[1125,150],[1150,135],[1175,155],[1195,190],[1250,192],[1285,170],[1330,190],[1366,225],[1368,290],[1364,350],[1356,420],[1332,462],[1300,467],[1250,432],[1200,412],[1168,372],[1100,346],[1080,362],[1048,342],[1045,305],[1018,265]];
trace(vip);
ctx.fillStyle = '#aef5b9';
ctx.fill();
vip.forEach(function (p) {
  var q = toPage(p);
  ctx.beginPath();
  ctx.arc(q[0], q[1], 5, 0, 6.283);
  ctx.fill();
});

// stray selected cells
[[1043,241],[1057,241],[1026,258],[1122,380],[1132,380],[1112,396],[1137,401],[1106,444],[1197,391],[1198,402],[1197,408],[1179,419],[1186,428],[1191,436],[1026,538],[1033,556],[1043,567],[1088,574],[1246,528],[1272,528],[941,624],[713,648],[591,683],[594,704],[853,771],[889,837]].forEach(function (p) {
  ctx.beginPath();
  ctx.arc(p[0], p[1], 5, 0, 6.283);
  ctx.fill();
});

var labels = [
  ['OL',768,348],['nan',805,388],['IN-SV2C',1021,230],['IN-VIP',1170,249,'big'],['EN-L4',981,434],
  ['IN-SST',1121,423],['IN-PVALB',1210,418],['B cells',654,576],['EN-L2-3',978,585],['EN-MIX',1024,588],
  ['EN-L5-6',970,616],['EN-PYR',1135,613],['OPC',1304,555],['T cells',718,661],['Phagocytes',769,656],
  ['Endo cells',571,693],['Microglia',724,700],['Glia-MIX',856,697],['Stromal cells',602,740],['Astrocytes',898,851]
];
var plot = document.getElementById('plot');
labels.forEach(function (l) {
  var s = el('span', 'plot-label' + (l[3] ? ' big' : ''), l[0]);
  s.style.left = (l[1] - OX) + 'px';
  s.style.top = (l[2] - OY) + 'px';
  plot.appendChild(s);
});
```
